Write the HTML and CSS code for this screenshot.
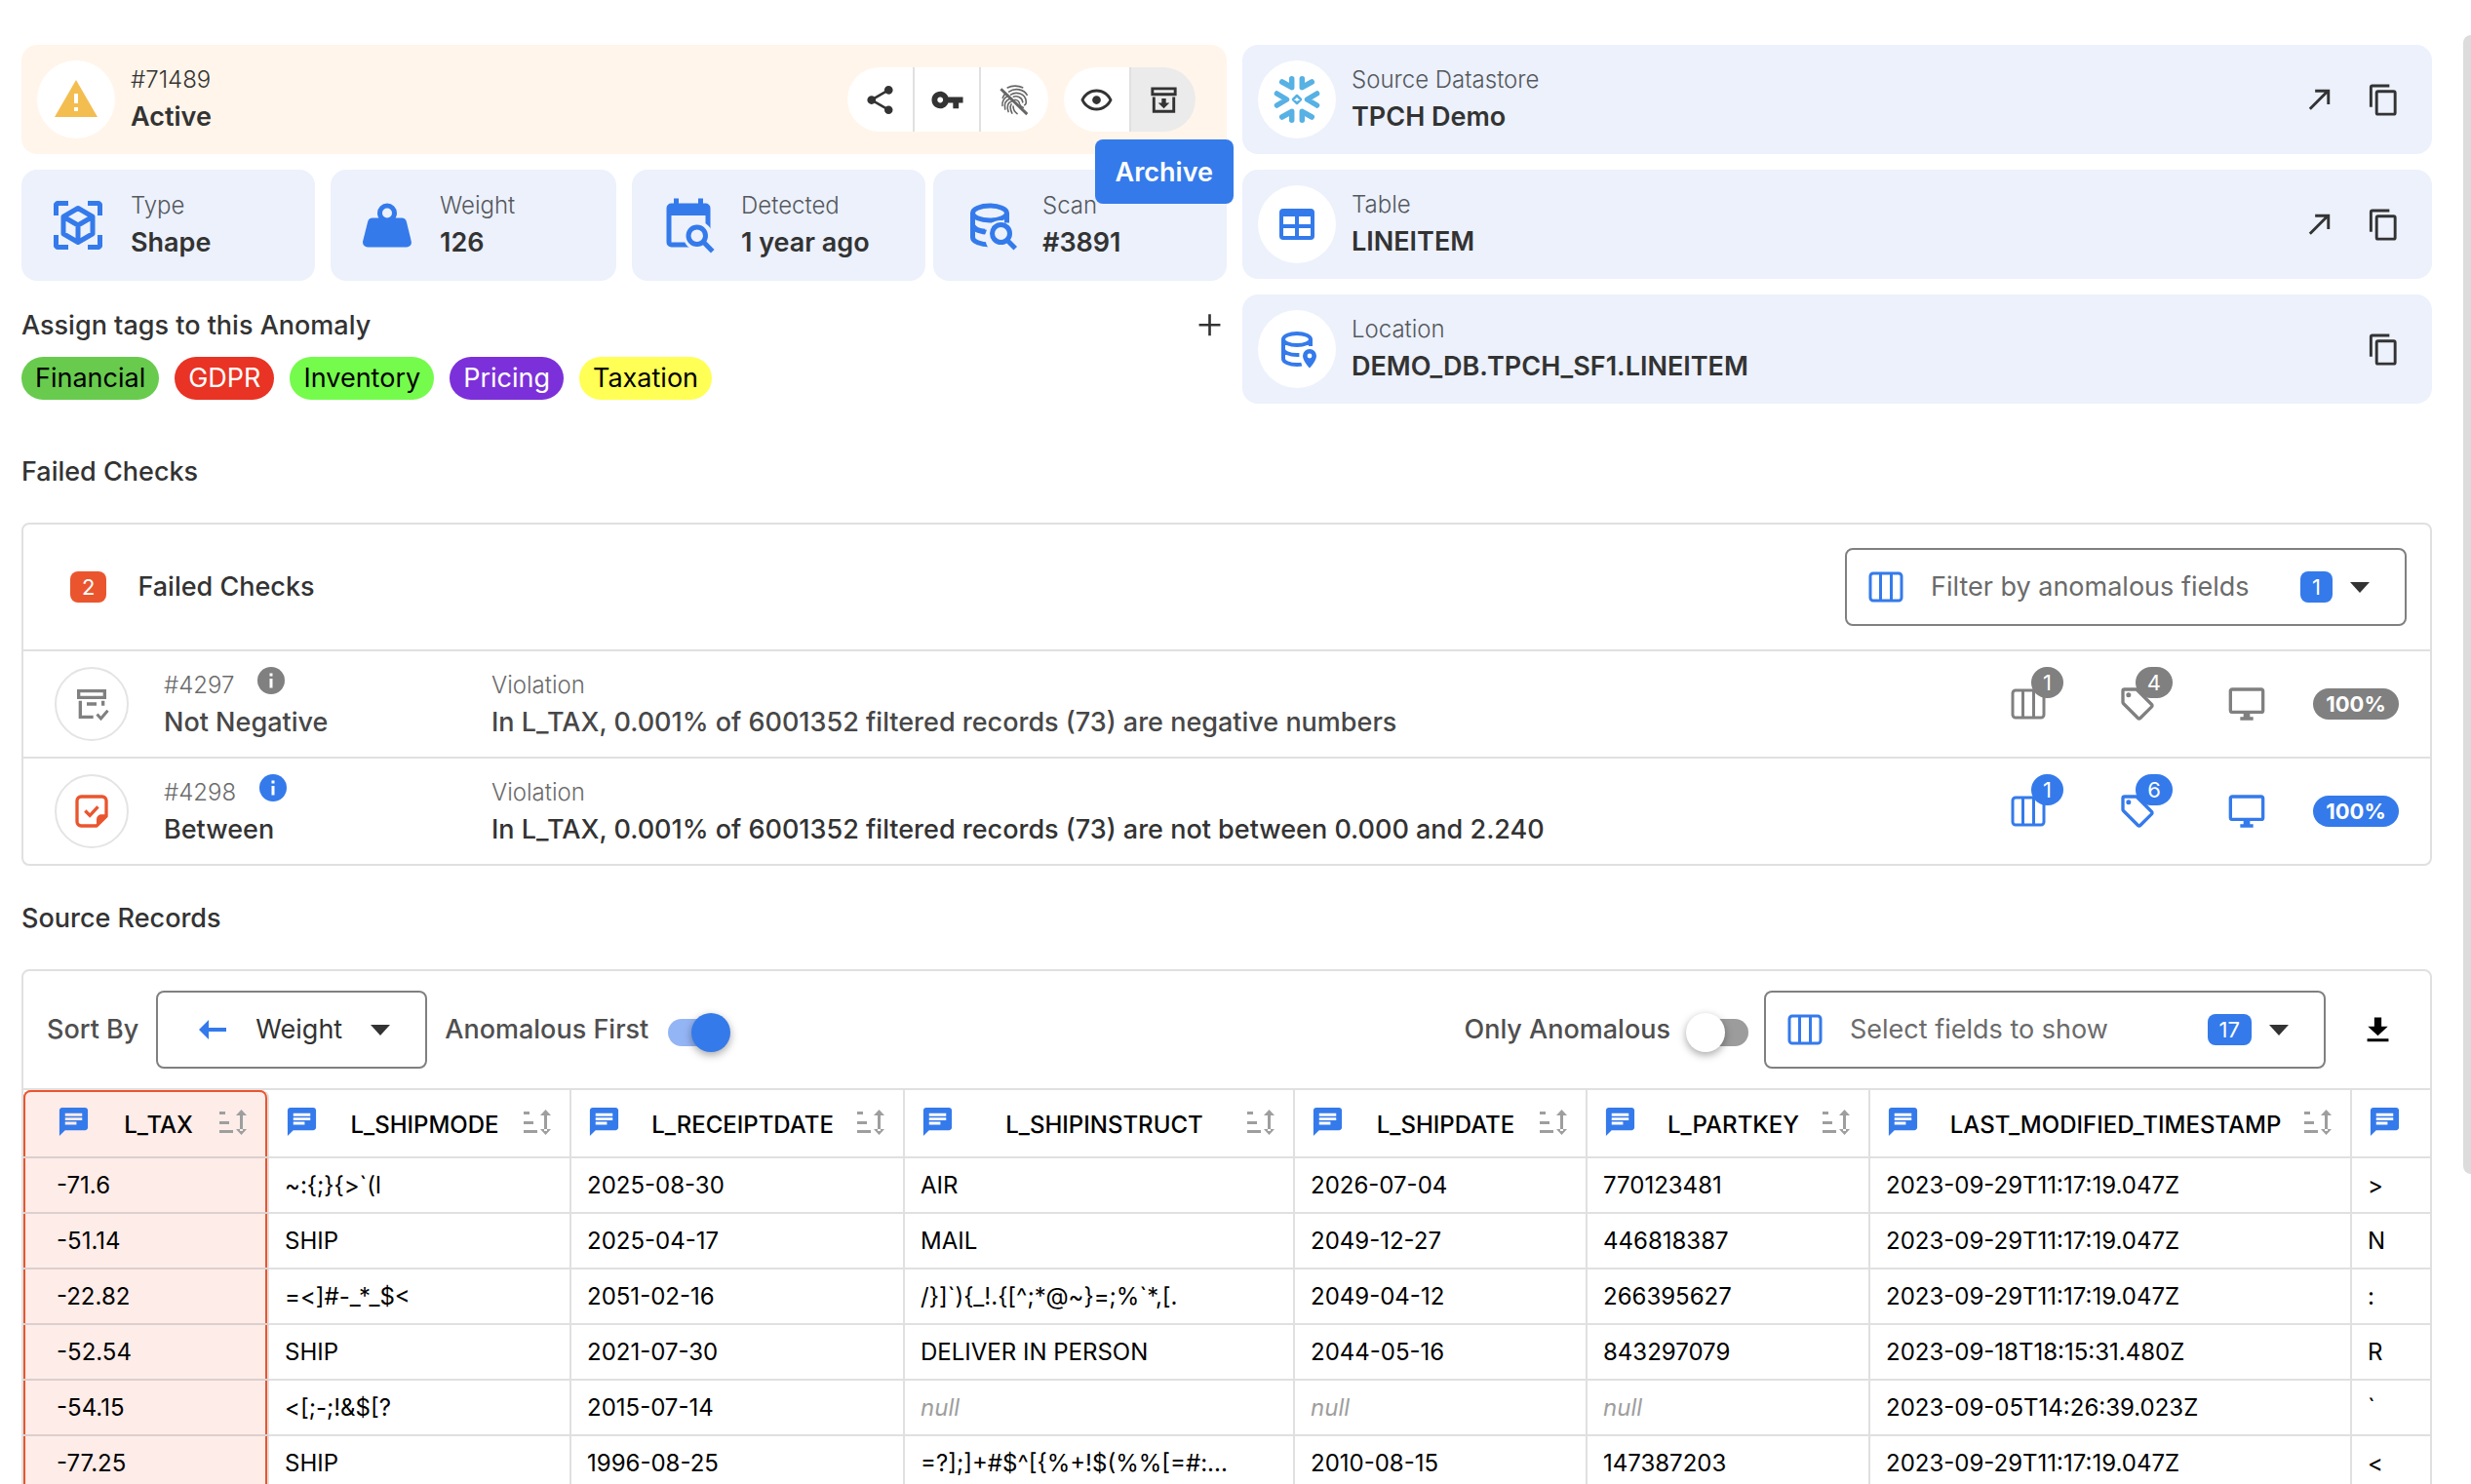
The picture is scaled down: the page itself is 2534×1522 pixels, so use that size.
FILE: index.html
```html
<!DOCTYPE html>
<html lang="en">
<head>
<meta charset="utf-8">
<title>Anomaly #71489</title>
<link rel="stylesheet" href="styles.css">
</head>
<body>
<svg class="sprite" aria-hidden="true">
  <symbol id="i-columns" viewBox="0 0 36 32"><g fill="none" stroke="currentColor" stroke-width="3"><rect x="2" y="2" width="32" height="28" rx="3"/><path d="M12.500 2v28M23.500 2v28"/></g></symbol>
  <symbol id="i-caret" viewBox="0 0 20 12"><path fill="currentColor" d="M0 1h20L10 12z"/></symbol>
  <symbol id="i-copy" viewBox="0 0 24 24"><path fill="currentColor" d="M19,21H8V7H19M19,5H8A2,2 0 0,0 6,7V21A2,2 0 0,0 8,23H19A2,2 0 0,0 21,21V7A2,2 0 0,0 19,5M16,1H4A2,2 0 0,0 2,3V17H4V3H16V1Z"/></symbol>
  <symbol id="i-open" viewBox="0 0 36 36"><path fill="none" stroke="currentColor" stroke-width="3" d="M7 27.500L26.500 8M12.500 8.500H26.500V22.500"/></symbol>
  <symbol id="i-message" viewBox="0 0 24 24"><path fill="currentColor" d="M20 2H4C2.9 2 2 2.9 2 4V22L6 18H20C21.1 18 22 17.1 22 16V4C22 2.9 21.1 2 20 2M6 9H18V11H6M14 14H6V12H14M18 8H6V6H18"/></symbol>
  <symbol id="i-sort" viewBox="0 0 30 28"><g fill="currentColor"><path d="M1 3h6v3H1zM1 13h10v3H1zM1 22h14v3H1zM22 5h3v18h-3zM23.500 1l5.500 6H18zM23.500 27l5.500-6H18z"/></g></symbol>
  <symbol id="i-monitor" viewBox="0 0 24 24"><path fill="currentColor" d="M21,16H3V4H21M21,2H3C1.890,2 1,2.890 1,4V16A2,2 0 0,0 3,18H10V20H8V22H16V20H14V18H21A2,2 0 0,0 23,16V4C23,2.890 22.100,2 21,2Z"/></symbol>
  <symbol id="i-tag" viewBox="0 0 24 24"><path fill="currentColor" d="M21.410 11.580L12.410 2.580A2 2 0 0 0 11 2H4A2 2 0 0 0 2 4V11A2 2 0 0 0 2.590 12.420L11.590 21.420A2 2 0 0 0 13 22A2 2 0 0 0 14.410 21.410L21.410 14.410A2 2 0 0 0 22 13A2 2 0 0 0 21.410 11.580M13 20L4 11V4H11L20 13M6.500 5A1.500 1.500 0 1 1 5 6.500A1.500 1.500 0 0 1 6.500 5Z"/></symbol>
  <symbol id="i-info" viewBox="0 0 28 28"><circle cx="14" cy="14" r="14" fill="currentColor"/><path fill="#fff" d="M12.500 6.500h3v3h-3zM12.500 12h3v9.500h-3z"/></symbol>
</svg>

<main class="page">
  <div class="overview">
    <section class="overview-left">
      <div class="card card-warning">
        <span class="disc"><svg class="icon-xl" viewBox="0 0 24 24"><path fill="#f4bd50" d="M13 14H11V9H13M13 18H11V16H13M1 21H23L12 2L1 21Z"/></svg></span>
        <div class="card-text"><span class="label label-dark">#71489</span><strong class="value">Active</strong></div>
        <div class="actions">
          <div class="pill-group">
            <button type="button" aria-label="Share"><svg class="icon-md" viewBox="0 0 24 24"><path fill="currentColor" d="M18,16.080C17.240,16.080 16.560,16.380 16.040,16.850L8.910,12.700C8.960,12.470 9,12.240 9,12C9,11.760 8.960,11.530 8.910,11.300L15.960,7.190C16.500,7.690 17.210,8 18,8A3,3 0 0,0 21,5A3,3 0 0,0 18,2A3,3 0 0,0 15,5C15,5.240 15.040,5.470 15.090,5.700L8.040,9.810C7.500,9.310 6.790,9 6,9A3,3 0 0,0 3,12A3,3 0 0,0 6,15C6.790,15 7.500,14.690 8.040,14.190L15.160,18.340C15.110,18.550 15.080,18.770 15.080,19C15.080,20.610 16.390,21.910 18,21.910C19.610,21.910 20.920,20.610 20.920,19A2.920,2.920 0 0,0 18,16.080Z"/></svg></button>
            <button type="button" aria-label="Key"><svg class="icon-md" viewBox="0 0 24 24"><path fill="currentColor" d="M7 14C5.900 14 5 13.100 5 12S5.900 10 7 10 9 10.900 9 12 8.100 14 7 14M12.600 10C11.800 7.700 9.600 6 7 6C3.700 6 1 8.700 1 12S3.700 18 7 18C9.600 18 11.800 16.300 12.600 14H16V18H20V14H23V10H12.600Z"/></svg></button>
            <button type="button" class="muted" aria-label="Fingerprint off"><svg class="icon-md" viewBox="0 0 24 24" fill="none" stroke="currentColor" stroke-linecap="round"><path stroke-width="1.100" d="M7 3.400C10 1.700 14.500 1.700 17.600 3.300M8 6.200C12 3.400 18.500 4.200 20.700 8.500M9.300 8.300C13 5.800 19.300 7.400 20 12.600C20.200 14 20.200 15.200 19 15.600M11.200 9.700C14 8.800 17.300 10.400 17.700 13.600M12.200 11.800C14.300 11.900 15.200 13.300 15.600 15C15.900 16 16.800 17 18 17.300M3.600 10.500C4.200 9 5 8 5.600 7.300M3.400 16C3.200 13.500 4 11 6.900 9.400M5.300 18.500C4.700 15.500 5.300 12.300 8.700 11.100M7.600 20.300C6.300 16.500 7.200 13.600 10.200 12.800M10.200 21.300C8.800 18.500 8.700 16.500 9.700 15M13.800 21.700C11.800 20.300 11 18.500 11 16.500"/><path stroke-width="2" stroke-linecap="butt" d="M2.300 4.300L20.800 22"/></svg></button>
          </div>
          <div class="pill-group">
            <button type="button" aria-label="Watch"><svg class="icon-md" viewBox="0 0 24 24"><path fill="currentColor" d="M12,9A3,3 0 0,1 15,12A3,3 0 0,1 12,15A3,3 0 0,1 9,12A3,3 0 0,1 12,9M12,4.500C17,4.500 21.270,7.610 23,12C21.270,16.390 17,19.500 12,19.500C7,19.500 2.730,16.390 1,12C2.730,7.610 7,4.500 12,4.500M3.180,12C4.830,15.360 8.240,17.500 12,17.500C15.760,17.500 19.170,15.360 20.820,12C19.170,8.640 15.760,6.500 12,6.500C8.240,6.500 4.830,8.640 3.180,12Z"/></svg></button>
            <button type="button" class="hovered" aria-describedby="archive-tip" aria-label="Archive"><svg class="icon-md" viewBox="0 0 24 24"><path fill="currentColor" d="M20 21H4V10H6V19H18V10H20V21M3 3H21V9H3V3M5 5V7H19V5M10.500 11V14H8L12 18L16 14H13.500V11"/></svg></button>
            <span class="tooltip" role="tooltip" id="archive-tip">Archive</span>
          </div>
        </div>
      </div>

      <div class="stats">
        <div class="card stat">
          <svg class="icon-stat" viewBox="0 0 24 24" fill="none" stroke="currentColor" stroke-width="2" stroke-linejoin="round"><path d="M8 3H3.500L3 3.500V8M16 3h4.500l.5.500V8M8 21H3.500L3 20.500V16M16 21h4.500l.5-.5V16M12 5l6 3.500v7L12 19l-6-3.500v-7zM6 8.500l6 3.500 6-3.500M12 12v7"/></svg>
          <div class="card-text"><span class="label">Type</span><strong class="value">Shape</strong></div>
        </div>
        <div class="card stat">
          <svg class="icon-stat" viewBox="0 0 24 24"><path fill="currentColor" d="M12,3A4,4 0 0,1 16,7C16,7.730 15.810,8.410 15.460,9H18C18.950,9 19.750,9.670 19.950,10.560C21.960,18.570 22,18.780 22,19A2,2 0 0,1 20,21H4A2,2 0 0,1 2,19C2,18.780 2.040,18.570 4.050,10.560C4.250,9.670 5.050,9 6,9H8.540C8.190,8.410 8,7.730 8,7A4,4 0 0,1 12,3M12,5A2,2 0 0,0 10,7A2,2 0 0,0 12,9A2,2 0 0,0 14,7A2,2 0 0,0 12,5Z"/></svg>
          <div class="card-text"><span class="label">Weight</span><strong class="value">126</strong></div>
        </div>
        <div class="card stat">
          <svg class="icon-stat" viewBox="0 0 24 24"><path fill="currentColor" d="M6 1h2v2h8V1h2v2h1a2 2 0 0 1 2 2v14a2 2 0 0 1-2 2H5a2 2 0 0 1-2-2V5a2 2 0 0 1 2-2h1zM5 8v11h14V8z"/><circle cx="16" cy="16.500" r="6" fill="#ecf1fc"/><path fill="#ecf1fc" d="M15 19h7v4h-7z"/><circle cx="15.500" cy="16.300" r="3.500" fill="none" stroke="currentColor" stroke-width="2"/><path stroke="currentColor" stroke-width="2" d="M17.900 18.600l4 4.100"/></svg>
          <div class="card-text"><span class="label">Detected</span><strong class="value">1 year ago</strong></div>
        </div>
        <div class="card stat">
          <svg class="icon-stat" viewBox="0 0 24 24"><g fill="none" stroke="currentColor" stroke-width="2"><ellipse cx="12" cy="7" rx="7" ry="3"/><path d="M5 7v10c0 1.660 3.130 3 7 3M5 12c0 1.660 3.130 3 7 3M19 7v5c0 1.660-3.130 3-7 3"/></g><path fill="#ecf1fc" d="M11 13.300c1.500-3 5-4.300 9.500-2.300v12h-7.500c-1.500-1.500-3-3-3-7z"/><path fill="none" stroke="currentColor" stroke-width="2" d="M5 12c.7 1.400 2.500 2.200 5 2.500M5 7v4c0 .3 0 .7.200 1M19 7v4"/><circle cx="16.600" cy="15.400" r="3.600" fill="none" stroke="currentColor" stroke-width="2"/><path stroke="currentColor" stroke-width="2" d="M18.900 17.900l3.600 3.600"/></svg>
          <div class="card-text"><span class="label">Scan</span><strong class="value">#3891</strong></div>
        </div>
      </div>

      <div class="tags-head">
        <h2>Assign tags to this Anomaly</h2>
        <button type="button" class="icon-button" aria-label="Add tag"><svg class="icon-md" viewBox="0 0 24 24"><path fill="currentColor" d="M19.500 12h-6.600v6.600h-1.800v-6.600H4.500v-1.800h6.600V3.600h1.800v6.600h6.600z"/></svg></button>
      </div>
      <div class="tags">
        <span class="tag tag-financial">Financial</span>
        <span class="tag tag-gdpr">GDPR</span>
        <span class="tag tag-inventory">Inventory</span>
        <span class="tag tag-pricing">Pricing</span>
        <span class="tag tag-taxation">Taxation</span>
      </div>
    </section>

    <section class="overview-right">
      <div class="card">
        <span class="disc"><svg class="icon-xl" viewBox="-24 -24 48 48" fill="none" stroke="#57b1e4" stroke-linecap="round" stroke-linejoin="round"><path stroke-width="5.500" d="M-5.300-21.200V-12.300L-15.300-18M5.300-21.200V-12.300L15.300-18M-5.300 21.200V12.300L-15.300 18M5.300 21.200V12.300L15.300 18M-20.500-6L-10.500 0L-20.500 6M20.500-6L10.500 0L20.500 6"/><path stroke-width="2.500" d="M0-4L4 0L0 4L-4 0z"/></svg></span>
        <div class="card-text"><span class="label">Source Datastore</span><strong class="value">TPCH Demo</strong></div>
        <div class="links">
          <a class="icon-button" href="#datastore" aria-label="Open datastore"><svg class="icon-md"><use href="#i-open"/></svg></a>
          <button type="button" class="icon-button" aria-label="Copy datastore"><svg class="icon-md"><use href="#i-copy"/></svg></button>
        </div>
      </div>
      <div class="card">
        <span class="disc"><svg class="icon-xl" viewBox="0 0 24 24"><path fill="currentColor" d="M5,4H19A2,2 0 0,1 21,6V18A2,2 0 0,1 19,20H5A2,2 0 0,1 3,18V6A2,2 0 0,1 5,4M5,8V12H11V8H5M13,8V12H19V8H13M5,14V18H11V14H5M13,14V18H19V14H13Z"/></svg></span>
        <div class="card-text"><span class="label">Table</span><strong class="value">LINEITEM</strong></div>
        <div class="links">
          <a class="icon-button" href="#table" aria-label="Open table"><svg class="icon-md"><use href="#i-open"/></svg></a>
          <button type="button" class="icon-button" aria-label="Copy table"><svg class="icon-md"><use href="#i-copy"/></svg></button>
        </div>
      </div>
      <div class="card">
        <span class="disc"><svg class="icon-xl" viewBox="0 0 24 24"><path fill="none" stroke="currentColor" stroke-width="2" d="M19 7c0 1.660-3.130 3-7 3S5 8.660 5 7s3.130-3 7-3 7 1.340 7 3zv3.500M5 7v10c0 1.660 3.130 3 7 3 .9 0 1.700 0 2.400-.2M5 12c0 1.660 3.130 3 7 3h1.200M19 7v3"/><path fill="currentColor" fill-rule="evenodd" d="M18.500 12a3.500 3.500 0 0 0-3.500 3.500c0 2.600 3.500 6.300 3.500 6.300s3.500-3.700 3.500-6.300a3.500 3.500 0 0 0-3.500-3.500zm0 4.700a1.200 1.200 0 1 1 0-2.400 1.200 1.200 0 0 1 0 2.400z"/></svg></span>
        <div class="card-text"><span class="label">Location</span><strong class="value">DEMO_DB.TPCH_SF1.LINEITEM</strong></div>
        <div class="links">
          <button type="button" class="icon-button" aria-label="Copy location"><svg class="icon-md"><use href="#i-copy"/></svg></button>
        </div>
      </div>
    </section>
  </div>

  <h2 class="section-title">Failed Checks</h2>
  <section class="panel">
    <header class="panel-head">
      <span class="count count-red">2</span>
      <h3>Failed Checks</h3>
      <div class="field field-wide">
        <svg class="field-icon"><use href="#i-columns"/></svg>
        <select aria-label="Filter by anomalous fields"><option>Filter by anomalous fields</option></select>
        <span class="count">1</span>
        <svg class="caret"><use href="#i-caret"/></svg>
      </div>
    </header>
    <article class="check check-archived">
      <span class="ring"><svg class="icon-lg" viewBox="0 0 24 24"><path fill="currentColor" d="M3 3H21V9H3V3M5 5V7H19V5M4 10h2v9h7v2H4zM9 11h6v2H9zM18 10h2v3h-2z"/><path fill="none" stroke="currentColor" stroke-width="1.800" d="M15.300 18.300l2.400 2.700 4.200-5"/></svg></span>
      <div class="check-text"><span class="label">#4297 <svg class="icon-info"><use href="#i-info"/></svg></span><span class="title">Not Negative</span></div>
      <div class="check-text"><span class="label">Violation</span><span class="title">In L_TAX, 0.001% of 6001352 filtered records (73) are negative numbers</span></div>
      <div class="metrics">
        <span class="metric"><svg class="field-icon"><use href="#i-columns"/></svg><span class="badge">1</span></span>
        <span class="metric"><svg class="icon-lg"><use href="#i-tag"/></svg><span class="badge">4</span></span>
        <span class="metric"><svg class="icon-lg"><use href="#i-monitor"/></svg></span>
        <span class="percent">100%</span>
      </div>
    </article>
    <article class="check">
      <span class="ring ring-failed"><svg class="icon-lg" viewBox="0 0 24 24"><path fill="none" stroke="currentColor" stroke-width="2" stroke-linejoin="round" d="M5.500 3h13A2.500 2.500 0 0 1 21 5.500V15l-6 6H5.500A2.500 2.500 0 0 1 3 18.500v-13A2.500 2.500 0 0 1 5.500 3z"/><path fill="currentColor" d="M21.500 14H18a3 3 0 0 0-3 3v4.500l6.500-6z"/><path fill="none" stroke="currentColor" stroke-width="2" d="M8 11.700l2.900 2.900 5-5.400"/></svg></span>
      <div class="check-text"><span class="label">#4298 <svg class="icon-info"><use href="#i-info"/></svg></span><span class="title">Between</span></div>
      <div class="check-text"><span class="label">Violation</span><span class="title">In L_TAX, 0.001% of 6001352 filtered records (73) are not between 0.000 and 2.240</span></div>
      <div class="metrics">
        <span class="metric"><svg class="field-icon"><use href="#i-columns"/></svg><span class="badge">1</span></span>
        <span class="metric"><svg class="icon-lg"><use href="#i-tag"/></svg><span class="badge">6</span></span>
        <span class="metric"><svg class="icon-lg"><use href="#i-monitor"/></svg></span>
        <span class="percent">100%</span>
      </div>
    </article>
  </section>

  <h2 class="section-title">Source Records</h2>
  <section class="panel">
    <div class="toolbar">
      <label class="tool-label" for="sort">Sort By</label>
      <div class="field field-sort">
        <svg class="sort-arrow" viewBox="0 0 28 20"><path fill="currentColor" d="M0 10L10 0v8h18v4H10v8z"/></svg>
        <select id="sort"><option>Weight</option></select>
        <svg class="caret"><use href="#i-caret"/></svg>
      </div>
      <label class="tool-label" for="first">Anomalous First</label>
      <input class="switch" type="checkbox" id="first" checked>
      <label class="tool-label push" for="only">Only Anomalous</label>
      <input class="switch" type="checkbox" id="only">
      <div class="field field-wide">
        <svg class="field-icon"><use href="#i-columns"/></svg>
        <select aria-label="Select fields to show"><option>Select fields to show</option></select>
        <span class="count">17</span>
        <svg class="caret"><use href="#i-caret"/></svg>
      </div>
      <button type="button" class="icon-button download" aria-label="Download"><svg class="icon-md" viewBox="0 0 24 24"><path fill="currentColor" d="M4.500,20H19.500V18H4.500M19,9.500H14.500V3H9.500V9.500H5L12,16L19,9.500Z"/></svg></button>
    </div>
    <table class="records">
      <colgroup><col class="c1"><col class="c2"><col class="c3"><col class="c4"><col class="c5"><col class="c6"><col class="c7"><col></colgroup>
      <thead>
        <tr>
          <th scope="col"><div class="head"><svg class="icon-md"><use href="#i-message"/></svg><span>L_TAX</span><svg class="sort"><use href="#i-sort"/></svg></div></th>
          <th scope="col"><div class="head"><svg class="icon-md"><use href="#i-message"/></svg><span>L_SHIPMODE</span><svg class="sort"><use href="#i-sort"/></svg></div></th>
          <th scope="col"><div class="head"><svg class="icon-md"><use href="#i-message"/></svg><span>L_RECEIPTDATE</span><svg class="sort"><use href="#i-sort"/></svg></div></th>
          <th scope="col"><div class="head"><svg class="icon-md"><use href="#i-message"/></svg><span>L_SHIPINSTRUCT</span><svg class="sort"><use href="#i-sort"/></svg></div></th>
          <th scope="col"><div class="head"><svg class="icon-md"><use href="#i-message"/></svg><span>L_SHIPDATE</span><svg class="sort"><use href="#i-sort"/></svg></div></th>
          <th scope="col"><div class="head"><svg class="icon-md"><use href="#i-message"/></svg><span>L_PARTKEY</span><svg class="sort"><use href="#i-sort"/></svg></div></th>
          <th scope="col"><div class="head"><svg class="icon-md"><use href="#i-message"/></svg><span>LAST_MODIFIED_TIMESTAMP</span><svg class="sort"><use href="#i-sort"/></svg></div></th>
          <th scope="col"><div class="head"><svg class="icon-md"><use href="#i-message"/></svg></div></th>
        </tr>
      </thead>
      <tbody>
        <tr><td>-71.6</td><td>~:{;}{&gt;`(l</td><td>2025-08-30</td><td>AIR</td><td>2026-07-04</td><td>770123481</td><td>2023-09-29T11:17:19.047Z</td><td>&gt;</td></tr>
        <tr><td>-51.14</td><td>SHIP</td><td>2025-04-17</td><td>MAIL</td><td>2049-12-27</td><td>446818387</td><td>2023-09-29T11:17:19.047Z</td><td>N</td></tr>
        <tr><td>-22.82</td><td>=&lt;]#-_*_$&lt;</td><td>2051-02-16</td><td>/}]`){_!.{[^;*@~}=;%`*,[.</td><td>2049-04-12</td><td>266395627</td><td>2023-09-29T11:17:19.047Z</td><td>:</td></tr>
        <tr><td>-52.54</td><td>SHIP</td><td>2021-07-30</td><td>DELIVER IN PERSON</td><td>2044-05-16</td><td>843297079</td><td>2023-09-18T18:15:31.480Z</td><td>R</td></tr>
        <tr><td>-54.15</td><td>&lt;[;-;!&amp;$[?</td><td>2015-07-14</td><td><i class="null">null</i></td><td><i class="null">null</i></td><td><i class="null">null</i></td><td>2023-09-05T14:26:39.023Z</td><td>`</td></tr>
        <tr><td>-77.25</td><td>SHIP</td><td>1996-08-25</td><td>=?];]+#$^[{%+!$(%%[=#:...</td><td>2010-08-15</td><td>147387203</td><td>2023-09-29T11:17:19.047Z</td><td>&lt;</td></tr>
      </tbody>
    </table>
  </section>
</main>
<div class="scroll-thumb" aria-hidden="true"></div>
</body>
</html>
```
FILE: styles.css
```css
:root {
  --blue: #347aeb;
  --card: #ecf1fc;
  --ink: #333;
  --grey: #808080;
  --line: #e0e0e0;
  --red: #ea552e;
}

* { box-sizing: border-box; }

body {
  margin: 0;
  height: 100vh;
  overflow: hidden;
  position: relative;
  background: #fff;
  color: var(--ink);
  font: 400 27px/38px Inter, "Noto Sans", sans-serif;
}

h2, h3 { margin: 0; font-size: 27px; font-weight: 500; line-height: 40px; }
svg { display: block; flex: none; }
.sprite { display: none; }

button, select { font: inherit; color: inherit; background: none; border: 0; padding: 0; }

.page { padding: 46px 40px 0 22px; }

.icon-md { width: 35px; height: 35px; }
.icon-lg { width: 40px; height: 40px; }
.icon-xl { width: 48px; height: 48px; }
.icon-stat { width: 60px; height: 60px; }
.icon-info { width: 28px; height: 28px; }
.icon-button { display: flex; color: var(--ink); }

/* Overview cards */
.overview { display: grid; grid-template-columns: 1fr 1fr; margin-bottom: 50px; }
.overview-right { display: grid; gap: 16px; padding-left: 16px; align-content: start; }

.card {
  display: flex;
  align-items: center;
  gap: 16px;
  height: 112px;
  padding: 16px;
  border-radius: 16px;
  background: var(--card);
  color: var(--blue);
}
.card-warning { background: #fff5ea; }
.card-text { display: flex; flex-direction: column; padding-bottom: 2px; }

.disc {
  display: grid;
  place-items: center;
  width: 80px;
  height: 80px;
  border-radius: 50%;
  background: #fff;
}
.label { font-size: 24px; font-weight: 300; color: #55585c; }
.label-dark { color: var(--ink); }
.value { font-weight: 600; color: var(--ink); }

.actions { display: flex; gap: 16px; margin-left: auto; margin-right: 16px; }
.pill-group { display: flex; position: relative; }
.pill-group button {
  display: grid;
  place-items: center;
  width: 68px;
  height: 66px;
  background: #fff;
  color: var(--ink);
}
.pill-group button + button { border-left: 2px solid var(--line); }
.pill-group button:first-child { width: 67px; border-radius: 33px 0 0 33px; }
.pill-group button:last-of-type { border-radius: 0 33px 33px 0; }
.pill-group .muted { width: 71px; color: #666; }
.pill-group .hovered { background: #ebebeb; }

.tooltip {
  position: absolute;
  top: 74px;
  right: -39px;
  padding: 15px 21px 13px;
  border-radius: 8px;
  background: var(--blue);
  color: #fff;
  font-weight: 600;
}

.stats { display: grid; grid-template-columns: repeat(4, 1fr); margin-top: 16px; }
.stat { height: 114px; margin-left: 8px; padding-left: 28px; gap: 24px; }
.stat:first-child { margin-left: 0; margin-right: 8px; }
.stat:nth-child(2) { margin-right: 8px; }

.links { display: flex; gap: 30px; margin-left: auto; padding-right: 16px; }

.tags-head { display: flex; align-items: center; justify-content: space-between; margin: 26px 0 12px; }
.tags { display: flex; gap: 16px; }
.tag { padding: 0 14px; border-radius: 22px; line-height: 44px; color: #000; }
.tag-financial { background: #68cb4e; }
.tag-gdpr { background: #e93324; color: #fff; }
.tag-inventory { background: #75fb4c; }
.tag-pricing { background: #7c30d9; color: #fff; }
.tag-taxation { background: #ffff55; }

/* Panels */
.section-title { margin: 34px 0 32px; }
.panel { border: 2px solid var(--line); border-radius: 8px; overflow: hidden; }
.panel-head { display: flex; align-items: center; gap: 32px; height: 128px; padding: 0 24px 0 48px; }

.count {
  padding: 0 12px;
  border-radius: 8px;
  background: var(--blue);
  color: #fff;
  font-size: 22px;
  line-height: 32px;
}
.count-red { background: var(--red); }

.field {
  display: flex;
  align-items: center;
  height: 80px;
  border: 2px solid var(--grey);
  border-radius: 8px;
}
.field select { appearance: none; flex: 1; min-width: 0; outline: 0; }
.field-wide { width: 576px; margin-left: auto; padding: 0 36px 0 22px; color: var(--blue); }
.field-wide select { margin-left: 28px; color: #6b6b6b; }
.field-icon { width: 36px; height: 32px; }
.caret { width: 20px; height: 12px; margin-left: 18px; color: var(--ink); }

.check {
  display: grid;
  grid-template-columns: 112px 336px 1fr auto;
  align-items: center;
  height: 110px;
  padding: 0 20px 0 32px;
  border-top: 2px solid var(--line);
  color: var(--blue);
}
.ring {
  display: grid;
  place-items: center;
  width: 76px;
  height: 76px;
  border: 2px solid #e4e4e4;
  border-radius: 50%;
}
.ring-failed { color: var(--red); }
.check-text { display: flex; flex-direction: column; }
.check-text .label { display: flex; gap: 24px; color: #6b6b6b; }
.check-text .icon-info { color: var(--blue); }
.title { font-weight: 500; color: var(--ink); }
.check-archived, .check-archived .icon-info { color: var(--grey); }
.check-archived .title { color: #474747; }

.metrics { display: grid; grid-template-columns: repeat(4, 112px); justify-items: center; align-items: center; }
.metric { position: relative; display: grid; place-items: center; width: 40px; height: 40px; }
.badge, .percent { border-radius: 16px; background: var(--blue); color: #fff; font-size: 22px; line-height: 32px; }
.badge { position: absolute; top: -18px; right: -16px; padding: 0 12px; }
.percent { padding: 0 13px; font-weight: 700; }
.check-archived .badge, .check-archived .percent { background: var(--grey); }

/* Records toolbar */
.toolbar { display: flex; align-items: center; padding: 20px 36px 20px 24px; }
.tool-label { font-weight: 500; color: #4f4f4f; }
.push { margin-left: auto; }
.toolbar .field-wide { margin-left: 16px; }
.field-sort { width: 278px; margin: 0 18px; padding: 0 36px 0 42px; }
.field-sort select { margin-left: 30px; }
.sort-arrow { width: 28px; height: 20px; color: var(--blue); }
.download { margin-left: 36px; color: #000; }

.switch {
  appearance: none;
  flex: none;
  display: flex;
  align-items: center;
  width: 56px;
  height: 28px;
  margin: 6px 0 0 24px;
  border-radius: 14px;
  background: #9c9c9c;
}
.switch::before {
  content: "";
  width: 40px;
  height: 40px;
  margin-left: -8px;
  flex: none;
  border-radius: 50%;
  background: #fff;
  box-shadow: 0 3px 8px rgba(0, 0, 0, .35);
}
.switch:checked { margin-left: 20px; background: #94b5f5; }
.switch:checked::before { margin-left: 24px; background: var(--blue); }

/* Records table */
.records {
  width: 100%;
  table-layout: fixed;
  border-collapse: separate;
  border-spacing: 0;
  border-top: 2px solid var(--line);
  font-size: 24px;
  line-height: 36px;
  color: #000;
}
.c1 { width: 252px; }
.c2 { width: 310px; }
.c3 { width: 342px; }
.c4 { width: 400px; }
.c5 { width: 300px; }
.c6 { width: 290px; }
.c7 { width: 494px; }

.records th, .records td {
  padding: 0 16px;
  border-right: 2px solid var(--line);
  border-bottom: 2px solid var(--line);
  text-align: left;
  white-space: nowrap;
  overflow: hidden;
}
.records th { height: 70px; padding-right: 18px; font-weight: 500; }
.records td { height: 57px; }
.records th:last-child, .records td:last-child { border-right: 0; }
.records th:first-child, .records td:first-child {
  padding-left: 34px;
  background: #fdece8;
  background-clip: padding-box;
  border-bottom-color: #dccfcd;
  box-shadow: inset 2px 0 var(--red), inset -2px 0 var(--red);
}
.records th:first-child {
  padding-right: 20px;
  border-radius: 8px 8px 0 0;
  box-shadow: inset 2px 0 var(--red), inset -2px 0 var(--red), inset 0 2px var(--red);
}
.head { display: flex; align-items: center; }
.head .icon-md { margin-bottom: 4px; color: var(--blue); }
.head span { flex: 1; padding: 4px 0 0 8px; text-align: center; }
.head .sort { width: 30px; height: 28px; margin-bottom: 2px; color: #9e9e9e; }
.null { color: #9e9e9e; }

.scroll-thumb {
  position: absolute;
  top: 36px;
  right: 0;
  width: 8px;
  height: 1168px;
  border-radius: 8px 0 0 8px;
  background: #dcdcdc;
}
```
